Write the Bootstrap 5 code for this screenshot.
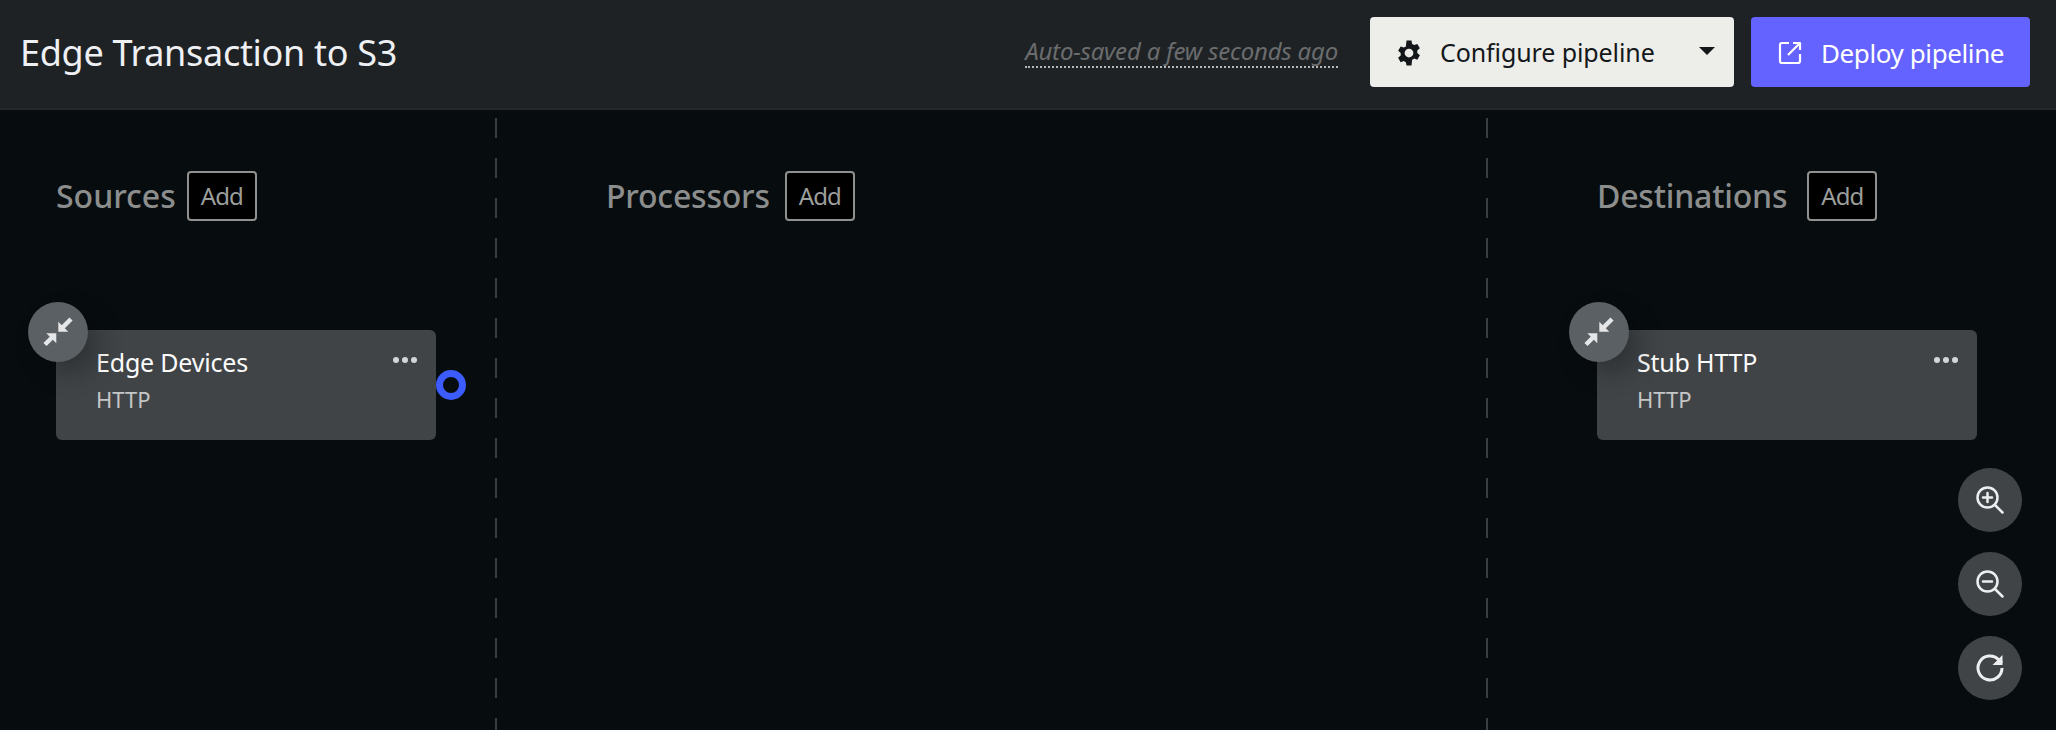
<!DOCTYPE html>
<html lang="en">
  <head>
    <meta charset="UTF-8" />
    <title>Edge Transaction to S3</title>
    <link href="https://cdn.jsdelivr.net/npm/bootstrap@5.3.2/dist/css/bootstrap.min.css" rel="stylesheet" />
    <style>
      html, body { height: 100%; }
      body { background: #070c0f; font-family: "Noto Sans", "Liberation Sans", sans-serif; overflow: hidden; }
      .top-bar { height: 110px; background: #1e2225; border-bottom: 2px solid #25272a; padding: 0 26px 4px 20px; }
      .pipeline-title { font-size: 36px; font-weight: 400; color: #eef0f3; margin: 2px 0 0; letter-spacing: -0.3px; }
      .autosave { font-size: 24px; font-style: italic; color: #6a6c6d; border-bottom: 2px dotted #b5b7b8; line-height: 30px; letter-spacing: -0.2px; margin-right: 32px; }
      .top-btn { height: 70px; font-size: 25px; border: 0; border-radius: 4px; }
      .btn-configure { width: 364px; background: #edeeea; color: #14171a; padding: 2px 19px 0 24px; margin-right: 17px; letter-spacing: -0.1px; }
      .btn-deploy { width: 279px; background: #6563ff; color: #fff; padding: 2px 0 0 27px; font-size: 26px; letter-spacing: -0.4px; }
      .deploy-icon { margin-right: 19px; }
      .caret-down { width: 0; height: 0; border-left: 8px solid transparent; border-right: 8px solid transparent; border-top: 8px solid #14171a; margin-top: -5px; }
      .lane-wrap { height: 620px; position: relative; }
      .lane { padding-top: 61px; }
      .lane-sources { width: 497px; padding-left: 56px; }
      .lane-processors { width: 991px; padding-left: 109px; }
      .lane-destinations { flex: 1; padding-left: 109px; }
      .lane-rule { background: repeating-linear-gradient(to bottom, #3b3e40 0 20px, transparent 20px 40px) no-repeat; background-size: 2px 100%; background-position: right 8px; }
      .lane-title { font-size: 32px; color: #8c8e8d; margin: 0; }
      .lane-processors .lane-title, .lane-destinations .lane-title { letter-spacing: -0.2px; }
      .add-btn { width: 70px; height: 50px; padding: 0; margin-left: 11px; background: #000; border: 2px solid #8f918e; border-radius: 4px; color: #9c9e9b; font-size: 24px; letter-spacing: -1px; }
      .lane-processors .add-btn { margin-left: 15px; }
      .lane-destinations .add-btn { margin-left: 20px; }
      .node-box { width: 380px; height: 110px; margin-top: 109px; background: #404447; border-radius: 6px; padding: 14px 19px 0 40px; position: relative; }
      .node-name { font-size: 25px; color: #fbfbfb; line-height: 36px; letter-spacing: -0.2px; }
      .node-kind { font-size: 22px; color: #c4c6c7; line-height: 34px; margin-top: 2px; }
      .node-dots { position: absolute; top: 27px; right: 19px; gap: 3px; }
      .node-dots span { width: 6px; height: 6px; border-radius: 50%; background: #d5d6d7; }
      .collapse-dot { position: absolute; left: -28px; top: -28px; width: 60px; height: 60px; border-radius: 50%; background: #5b6064; box-shadow: 12px 12px 24px rgba(0,0,0,.25); }
      .port-ring { position: absolute; right: -30px; top: 40px; width: 30px; height: 30px; border-radius: 50%; border: 7px solid #3d5cff; }
      .zoom-stack { position: absolute; right: 34px; bottom: 30px; gap: 20px; }
      .zoom-btn { width: 64px; height: 64px; padding: 0; border: 0; border-radius: 50%; background: #404447; }
    </style>
  </head>
  <body>
    <header class="top-bar d-flex align-items-center">
      <h1 class="pipeline-title me-auto">Edge Transaction to S3</h1>
      <span class="autosave">Auto-saved a few seconds ago</span>
      <button class="btn top-btn btn-configure d-flex align-items-center">
        <svg width="30" height="30" viewBox="0 0 24 24" fill="#14171a" class="me-3"><path fill-rule="evenodd" d="M14 2l.5 2.700c.6.2 1.100.5 1.600.9l2.600-.9 2 3.500-2.100 1.800a7 7 0 0 1 0 2l2.100 1.800-2 3.500-2.600-.9c-.5.4-1 .7-1.600.9L14 22h-4l-.5-2.700a7 7 0 0 1-1.600-.9l-2.600.9-2-3.500 2.100-1.800a7 7 0 0 1 0-2L3.300 10.200l2-3.500 2.600.9c.5-.4 1-.7 1.600-.9L10 2zM12 8.500a3.500 3.500 0 1 0 0 7 3.500 3.500 0 0 0 0-7z"/></svg>
        <span class="me-auto">Configure pipeline</span>
        <span class="caret-down"></span>
      </button>
      <button class="btn top-btn btn-deploy d-flex align-items-center">
        <svg width="24" height="24" viewBox="0 0 24 24" fill="none" stroke="#fff" stroke-width="2.200" stroke-linejoin="round" class="deploy-icon"><path d="M11 2H4a2 2 0 0 0-2 2v16a2 2 0 0 0 2 2h16a2 2 0 0 0 2-2v-7M15 2h7v7M22 2L10 14"/></svg>
        <span>Deploy pipeline</span>
      </button>
    </header>
    <main class="lane-wrap d-flex">
      <section class="lane lane-sources lane-rule">
        <div class="d-flex align-items-center"><h2 class="lane-title">Sources</h2><button class="btn add-btn">Add</button></div>
        <div class="node-box">
          <span class="collapse-dot d-flex align-items-center justify-content-center">
            <svg width="60" height="60" viewBox="0 0 60 60" fill="#e4e6e7"><path d="M30.300 19.700v10h10zM28.300 31.300h-10l10 10z"/><path d="M34 26l9-9M24.500 35L17 42.500" stroke="#e4e6e7" stroke-width="4.500"/></svg>
          </span>
          <div class="node-name">Edge Devices</div>
          <div class="node-kind">HTTP</div>
          <div class="node-dots d-flex"><span></span><span></span><span></span></div>
          <span class="port-ring"></span>
        </div>
      </section>
      <section class="lane lane-processors lane-rule">
        <div class="d-flex align-items-center"><h2 class="lane-title">Processors</h2><button class="btn add-btn">Add</button></div>
      </section>
      <section class="lane lane-destinations">
        <div class="d-flex align-items-center"><h2 class="lane-title">Destinations</h2><button class="btn add-btn">Add</button></div>
        <div class="node-box">
          <span class="collapse-dot d-flex align-items-center justify-content-center">
            <svg width="60" height="60" viewBox="0 0 60 60" fill="#e4e6e7"><path d="M30.300 19.700v10h10zM28.300 31.300h-10l10 10z"/><path d="M34 26l9-9M24.500 35L17 42.500" stroke="#e4e6e7" stroke-width="4.500"/></svg>
          </span>
          <div class="node-name">Stub HTTP</div>
          <div class="node-kind">HTTP</div>
          <div class="node-dots d-flex"><span></span><span></span><span></span></div>
        </div>
      </section>
      <div class="zoom-stack d-flex flex-column">
        <button class="zoom-btn" aria-label="Zoom in">
          <svg width="30" height="30" viewBox="0 0 30 30" fill="none" stroke="#eceeef" stroke-width="2.500" stroke-linecap="round"><circle cx="12.500" cy="12.500" r="10"/><path d="M20 20l7.500 7.500M8 12.500h9M12.500 8v9"/></svg>
        </button>
        <button class="zoom-btn" aria-label="Zoom out">
          <svg width="30" height="30" viewBox="0 0 30 30" fill="none" stroke="#eceeef" stroke-width="2.500" stroke-linecap="round"><circle cx="12.500" cy="12.500" r="10"/><path d="M20 20l7.500 7.500M8 12.500h9"/></svg>
        </button>
        <button class="zoom-btn" aria-label="Reset">
          <svg width="30" height="30" viewBox="0 0 30 30" fill="none" stroke="#eceeef" stroke-width="3"><path d="M27 15a12 12 0 1 1-3.500-8.500L27 10"/><path d="M27.500 2v10h-10z" stroke="none" fill="#eceeef"/></svg>
        </button>
      </div>
    </main>
    <script src="https://cdn.jsdelivr.net/npm/bootstrap@5.3.2/dist/js/bootstrap.bundle.min.js"></script>
  </body>
</html>
